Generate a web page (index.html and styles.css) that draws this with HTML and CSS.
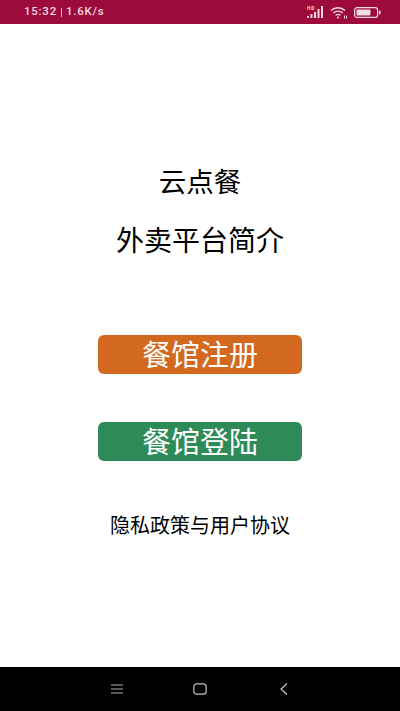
FILE: index.html
```html
<!DOCTYPE html>
<html lang="zh">
<head>
<meta charset="utf-8">
<title>云点餐</title>
<link rel="stylesheet" href="styles.css">
</head>
<body>
<div class="app">
  <header class="status">
    <div class="status-left"><span>15:32</span><span class="sep"></span><span>1.6K/s</span></div>
    <div class="status-right">
      <svg class="signal" width="17" height="14" viewBox="0 0 17 14">
        <text class="hd" x="0" y="5">HD</text>
        <rect x="0" y="11" width="2" height="2" fill="#f3d9e0"/>
        <rect x="3.5" y="9" width="2" height="4" fill="#f3d9e0"/>
        <rect x="7" y="7" width="2" height="6" fill="#f3d9e0"/>
        <rect x="10.5" y="4" width="2" height="9" fill="#f3d9e0"/>
        <rect x="14" y="1" width="2" height="12" fill="#f3d9e0"/>
      </svg>
      <svg class="wifi" width="18" height="13" viewBox="0 0 18 13" fill="none" stroke="#f3d9e0" stroke-width="1.3">
        <path d="M1 4.5C5 .8 11 .8 15 4.5"/>
        <path d="M3.3 7C6 4.6 10 4.6 12.7 7"/>
        <path d="M5.6 9.4C7 8.2 9 8.2 10.4 9.4"/>
        <circle cx="8" cy="11.4" r="1" fill="#f3d9e0" stroke="none"/>
        <path d="M14.5 9.5V12.5M16.5 9.5V12.5" stroke-width="1"/>
      </svg>
      <svg class="battery" width="27" height="11" viewBox="0 0 27 11">
        <rect x=".6" y=".6" width="23" height="9.8" rx="2.5" fill="none" stroke="#f3d9e0" stroke-width="1.2"/>
        <rect x="2.5" y="2.5" width="14" height="6" rx="1" fill="#f3d9e0"/>
        <rect x="25" y="3.5" width="1.6" height="4" rx=".8" fill="#f3d9e0"/>
      </svg>
    </div>
  </header>
  <main class="content">
    <h1 class="title">云点餐</h1>
    <a class="intro">外卖平台简介</a>
    <div class="actions">
      <button class="btn btn-orange">餐馆注册</button>
      <button class="btn btn-green">餐馆登陆</button>
    </div>
    <a class="policy">隐私政策与用户协议</a>
  </main>
  <nav class="navbar">
    <svg class="nav-menu" width="14" height="12" viewBox="0 0 14 12" stroke="#b0b0b0" stroke-width="1.2"><path d="M1 2H13M1 6H13M1 10H13"/></svg>
    <svg class="nav-home" width="14" height="12" viewBox="0 0 14 12" fill="none" stroke="#c4c4c4" stroke-width="1.2"><rect x=".8" y=".8" width="12.4" height="10.4" rx="3"/></svg>
    <svg class="nav-back" width="8" height="12" viewBox="0 0 8 12" fill="none" stroke="#d0d0d0" stroke-width="1.1"><path d="M7 .5L1 6L7 11.5"/></svg>
  </nav>
</div>
</body>
</html>
```
FILE: styles.css
```css
* { box-sizing: border-box; }
html, body { margin: 0; padding: 0; }
body { font-family: "Noto Sans CJK SC", "Noto Sans", sans-serif; background: #fff; }
.app { width: 400px; height: 711px; display: flex; flex-direction: column; overflow: hidden; }
.status {
  height: 24px; flex: none; background: #9c0b3c; color: #f3d9e0;
  display: flex; justify-content: space-between; align-items: center;
  padding: 0 19px 0 24px;
  font: 500 11.5px/1 Roboto, sans-serif; letter-spacing: .75px;
}
.status-left { display: flex; align-items: center; }
.sep { width: 1px; height: 9px; background: #e3b4c3; margin: 0 4px; }
.status-right { display: flex; align-items: center; gap: 6px; }
.hd { font: 700 5px Roboto, sans-serif; fill: #f3d9e0; }
.content { flex: 1; display: flex; flex-direction: column; align-items: center; padding-top: 139px; color: #000; }
.title { margin: 0; font-size: 27.5px; line-height: 34px; font-weight: 400; }
.intro { margin-top: 25px; font-size: 28px; line-height: 34px; }
.actions { margin-top: 79px; display: flex; flex-direction: column; gap: 48px; }
.btn {
  display: block; width: 204px; height: 39px; padding: 0 0 3px; border: 0; border-radius: 6px;
  color: #fff; font: 400 29px/36px "Noto Sans CJK SC", sans-serif; text-align: center;
}
.btn-orange { background: #d2691e; }
.btn-green { background: #2e8b57; }
.policy { margin-top: 51px; font-size: 20px; line-height: 26px; }
.navbar {
  height: 44px; flex: none; background: #000; display: flex; align-items: center;
  padding-left: 110px; gap: 69px;
}
.nav-back { margin-left: 4px; }
```
